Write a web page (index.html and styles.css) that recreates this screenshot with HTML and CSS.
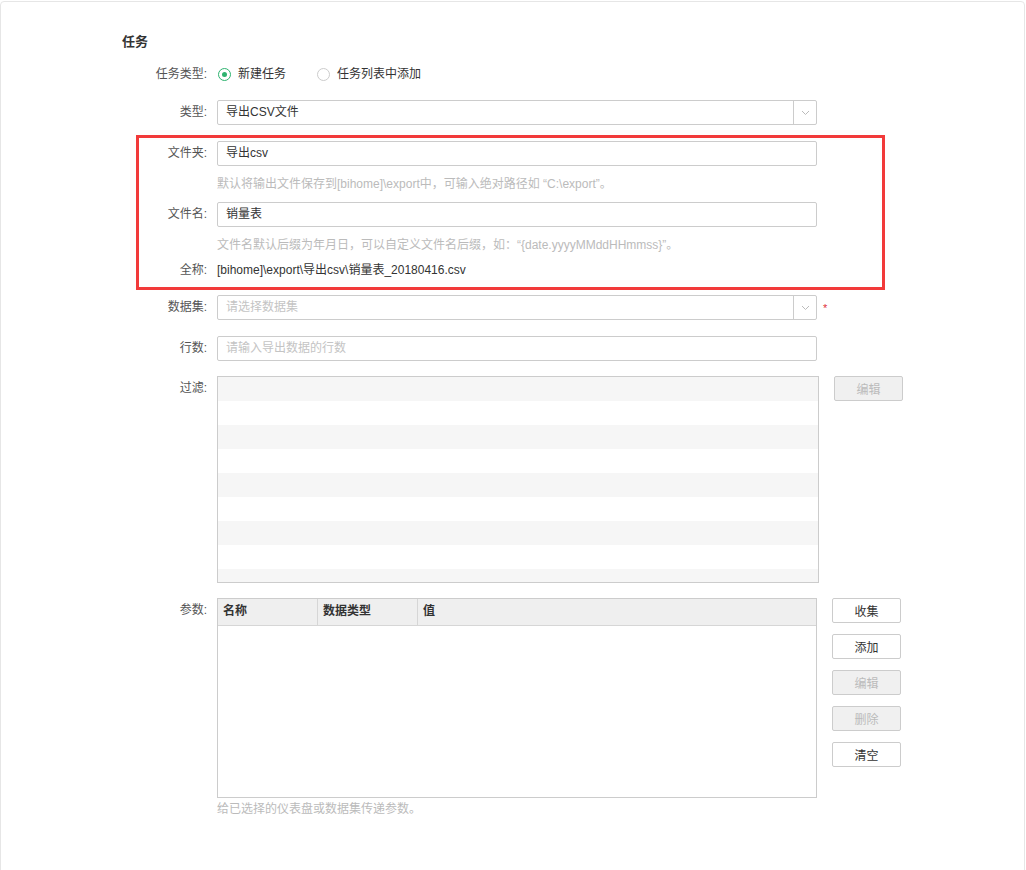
FILE: index.html
```html
<!DOCTYPE html>
<html lang="zh-CN">
<head>
  <meta charset="UTF-8">
  <title>任务</title>
  <link rel="stylesheet" href="styles.css">
</head>
<body>
  <div class="panel">
    <h3 class="title">任务</h3>

    <div class="row radio-row">
      <label class="lbl">任务类型:</label>
      <div class="radios">
        <span class="radio checked"><i></i>新建任务</span>
        <span class="radio"><i></i>任务列表中添加</span>
      </div>
    </div>

    <div class="row row-type">
      <label class="lbl">类型:</label>
      <div class="select">
        <span class="value">导出CSV文件</span>
        <span class="arrow"><svg width="9" height="6" viewBox="0 0 9 6"><path d="M1 1l3.5 3.5L8 1" fill="none" stroke="#bbb" stroke-width="1"/></svg></span>
      </div>
    </div>

    <div class="row row-folder">
      <label class="lbl">文件夹:</label>
      <div class="input">导出csv</div>
    </div>
    <div class="hint hint-folder">默认将输出文件保存到[bihome]\export中，可输入绝对路径如 “C:\export”。</div>

    <div class="row row-name">
      <label class="lbl">文件名:</label>
      <div class="input">销量表</div>
    </div>
    <div class="hint hint-name">文件名默认后缀为年月日，可以自定义文件名后缀，如：“{date.yyyyMMddHHmmss}”。</div>

    <div class="row row-full">
      <label class="lbl">全称:</label>
      <div class="text">[bihome]\export\导出csv\销量表_20180416.csv</div>
    </div>

    <div class="row row-dataset">
      <label class="lbl">数据集:</label>
      <div class="select">
        <span class="value placeholder">请选择数据集</span>
        <span class="arrow"><svg width="9" height="6" viewBox="0 0 9 6"><path d="M1 1l3.5 3.5L8 1" fill="none" stroke="#bbb" stroke-width="1"/></svg></span>
      </div>
      <span class="required">*</span>
    </div>

    <div class="row row-rows">
      <label class="lbl">行数:</label>
      <div class="input placeholder">请输入导出数据的行数</div>
    </div>

    <div class="row row-filter">
      <label class="lbl">过滤:</label>
      <div class="stripes">
        <div></div><div></div><div></div><div></div><div></div>
        <div></div><div></div><div></div><div></div>
      </div>
      <div class="side">
        <button class="btn" disabled>编辑</button>
      </div>
    </div>

    <div class="row row-params">
      <label class="lbl">参数:</label>
      <div class="table">
        <div class="thead">
          <span class="th">名称</span>
          <span class="th">数据类型</span>
          <span class="th last">值</span>
        </div>
      </div>
      <div class="side">
        <button class="btn">收集</button>
        <button class="btn">添加</button>
        <button class="btn" disabled>编辑</button>
        <button class="btn" disabled>删除</button>
        <button class="btn">清空</button>
      </div>
    </div>
    <div class="hint hint-params">给已选择的仪表盘或数据集传递参数。</div>

    <div class="mark"></div>
  </div>
</body>
</html>
```

FILE: styles.css
```css
/* page */
body {
  margin: 0;
  padding-top: 1px;
  background: #fff;
  font-family: "Liberation Sans", "Noto Sans CJK SC", sans-serif;
  font-size: 12px;
  color: #333;
}
.panel {
  position: relative;
  height: 900px;
  border: 1px solid #e6e6e6;
  border-radius: 4px;
  padding-left: 121px;
  margin-right: 1px;
}
.title {
  margin: 0;
  padding-top: 31px;
  font-size: 13px;
  line-height: 18px;
  font-weight: bold;
  color: #333;
}

/* rows */
.row {
  display: flex;
  align-items: flex-start;
}
.lbl {
  width: 85px;
  flex: none;
  margin-right: 10px;
  text-align: right;
  line-height: 25px;
  color: #555;
}
.radio-row { margin-top: 11px; }
.row-type { margin-top: 13px; }
.row-folder { margin-top: 16px; }
.hint-folder { margin-top: 9px; }
.row-name { margin-top: 9px; }
.hint-name { margin-top: 9px; }
.row-full { margin-top: 7px; }
.row-dataset { margin-top: 16px; }
.row-rows { margin-top: 16px; }
.row-filter { margin-top: 15px; }
.row-params { margin-top: 15px; }
.hint-params { margin-top: 2px; }

.radios {
  display: flex;
  line-height: 25px;
}
.radio {
  display: flex;
  align-items: center;
  margin-right: 30px;
  color: #333;
}
.radio i {
  width: 11px;
  height: 11px;
  border: 1px solid #ccc;
  border-radius: 50%;
  margin: 0 7px 0 1px;
  box-sizing: content-box;
  position: relative;
}
.radio.checked i {
  border-color: #2db36f;
}
.radio.checked i::after {
  content: "";
  position: absolute;
  left: 3px;
  top: 3px;
  width: 5px;
  height: 5px;
  border-radius: 50%;
  background: #2db36f;
}

.input,
.select {
  width: 600px;
  height: 25px;
  box-sizing: border-box;
  border: 1px solid #ccc;
  border-radius: 2px;
  padding: 0 8px;
  line-height: 23px;
  color: #333;
  background: #fff;
}
.select {
  display: flex;
  padding-right: 0;
}
.select .value { flex: 1; }
.select .arrow {
  width: 22px;
  border-left: 1px solid #ccc;
  display: flex;
  align-items: center;
  justify-content: center;
}
.placeholder { color: #c4c4c4; }
.required {
  color: #e0303a;
  margin-left: 6px;
  padding-top: 4px;
  line-height: 18px;
  font-size: 11px;
}
.text {
  line-height: 18px;
  color: #333;
}
.row-full .lbl { line-height: 18px; }
.hint {
  padding-left: 95px;
  line-height: 18px;
  color: #bbb;
}

/* filter list */
.stripes {
  width: 602px;
  height: 207px;
  box-sizing: border-box;
  border: 1px solid #ccc;
  overflow: hidden;
}
.stripes div { height: 24px; }
.stripes div:nth-child(odd) { background: #f6f6f6; }
.row-filter .lbl { line-height: 24px; }

/* params table */
.table {
  width: 600px;
  height: 200px;
  box-sizing: border-box;
  border: 1px solid #ccc;
}
.thead {
  display: flex;
  height: 26px;
  background: #efefef;
  border-bottom: 1px solid #d6d6d6;
}
.th {
  width: 100px;
  box-sizing: border-box;
  padding-left: 5px;
  line-height: 25px;
  font-weight: bold;
  color: #333;
  border-right: 1px solid #d6d6d6;
}
.th.last {
  flex: 1;
  border-right: none;
}

/* side buttons */
.side {
  display: flex;
  flex-direction: column;
  gap: 11px;
  margin-left: 15px;
}
.btn {
  width: 69px;
  height: 25px;
  border: 1px solid #ccc;
  border-radius: 2px;
  background: #fff;
  font-family: inherit;
  font-size: 12px;
  color: #333;
  padding: 0;
}
.btn:disabled {
  background: #f0f0f0;
  color: #bbb;
}

/* annotation overlay */
.mark {
  position: absolute;
  left: 135px;
  top: 133px;
  width: 743px;
  height: 149px;
  border: 3px solid #f23a3a;
}
```
